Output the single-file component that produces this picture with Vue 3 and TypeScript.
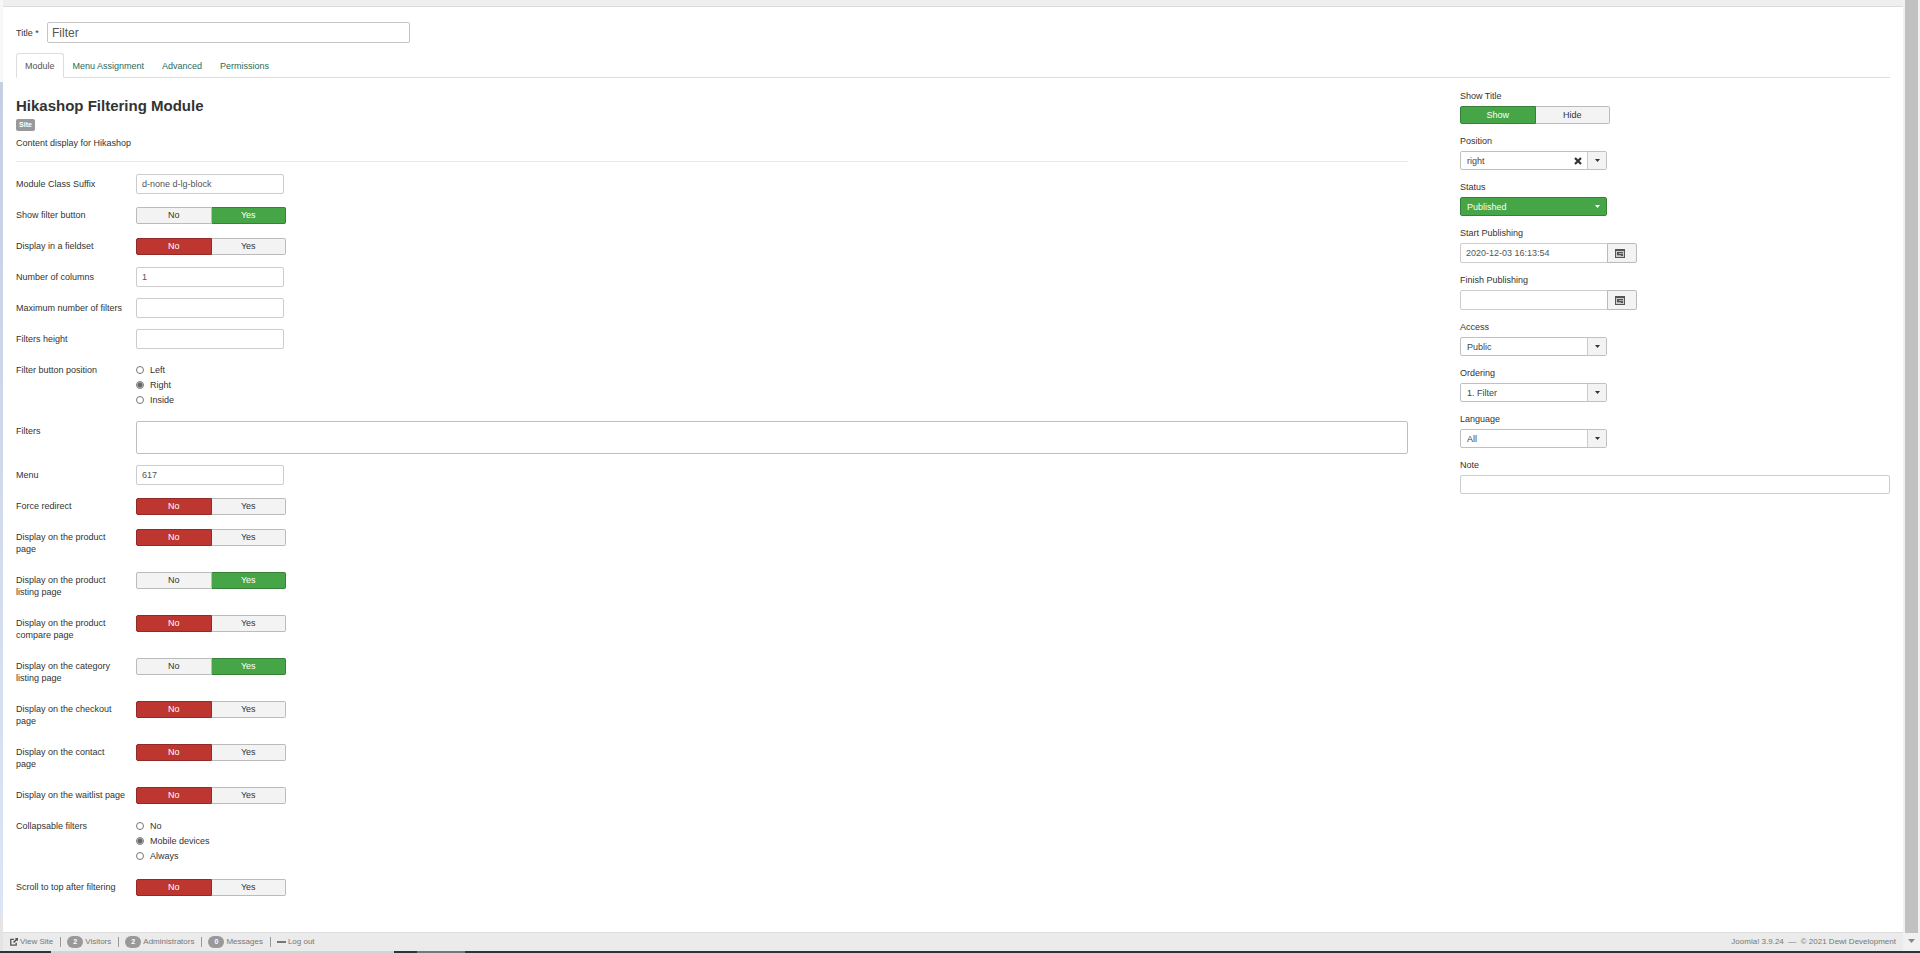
<script setup lang="ts">
import { reactive, ref } from 'vue'

type Kind = 'text' | 'toggle' | 'radios' | 'area'

interface Field {
  id: string
  label: string
  kind: Kind
  value: string
  options?: string[]
}

interface Side {
  id: string
  label: string
  kind: 'toggle' | 'select' | 'date' | 'text'
  value: string
  clearable?: boolean
  status?: boolean
}

const title = ref('Filter')
const tabs = ['Module', 'Menu Assignment', 'Advanced', 'Permissions']
const active = ref('Module')

const toggle = (id: string, label: string, value: string): Field => ({ id, label, kind: 'toggle', value, options: ['No', 'Yes'] })
const text = (id: string, label: string, value = ''): Field => ({ id, label, kind: 'text', value })

const fields = reactive<Field[]>([
  text('suffix', 'Module Class Suffix', 'd-none d-lg-block'),
  toggle('button', 'Show filter button', 'Yes'),
  toggle('fieldset', 'Display in a fieldset', 'No'),
  text('columns', 'Number of columns', '1'),
  text('max', 'Maximum number of filters'),
  text('height', 'Filters height'),
  { id: 'position', label: 'Filter button position', kind: 'radios', value: 'Right', options: ['Left', 'Right', 'Inside'] },
  { id: 'filters', label: 'Filters', kind: 'area', value: '' },
  text('menu', 'Menu', '617'),
  toggle('redirect', 'Force redirect', 'No'),
  toggle('product', 'Display on the product\npage', 'No'),
  toggle('listing', 'Display on the product\nlisting page', 'Yes'),
  toggle('compare', 'Display on the product\ncompare page', 'No'),
  toggle('category', 'Display on the category\nlisting page', 'Yes'),
  toggle('checkout', 'Display on the checkout\npage', 'No'),
  toggle('contact', 'Display on the contact\npage', 'No'),
  toggle('waitlist', 'Display on the waitlist page', 'No'),
  { id: 'collapse', label: 'Collapsable filters', kind: 'radios', value: 'Mobile devices', options: ['No', 'Mobile devices', 'Always'] },
  toggle('scroll', 'Scroll to top after filtering', 'No'),
])

const side = reactive<Side[]>([
  { id: 'showtitle', label: 'Show Title', kind: 'toggle', value: 'Show' },
  { id: 'pos', label: 'Position', kind: 'select', value: 'right', clearable: true },
  { id: 'status', label: 'Status', kind: 'select', value: 'Published', status: true },
  { id: 'start', label: 'Start Publishing', kind: 'date', value: '2020-12-03 16:13:54' },
  { id: 'finish', label: 'Finish Publishing', kind: 'date', value: '' },
  { id: 'access', label: 'Access', kind: 'select', value: 'Public' },
  { id: 'ordering', label: 'Ordering', kind: 'select', value: '1. Filter' },
  { id: 'language', label: 'Language', kind: 'select', value: 'All' },
  { id: 'note', label: 'Note', kind: 'text', value: '' },
])

const counts = [
  { n: 2, label: 'Visitors' },
  { n: 2, label: 'Administrators' },
  { n: 0, label: 'Messages' },
]
</script>

<template>
  <div class="window">
    <div class="body">
      <div class="edge"><i class="edge-top"></i><i class="edge-mid"></i><i class="edge-low"></i></div>
      <div class="page">
        <div class="toolbar"></div>
        <main class="content">
          <div class="title-row">
            <label for="title">Title *</label>
            <input id="title" v-model="title" type="text" />
          </div>
          <nav class="tabs">
            <button v-for="t in tabs" :key="t" type="button" :class="{ active: t === active }" @click="active = t">{{ t }}</button>
          </nav>
          <div class="columns">
            <section>
              <h1>Hikashop Filtering Module</h1>
              <span class="badge">Site</span>
              <p class="desc">Content display for Hikashop</p>
              <hr />
              <form class="form" @submit.prevent>
                <div v-for="f in fields" :key="f.id" class="row">
                  <label :id="f.id + '-label'" class="name" :for="f.kind === 'text' || f.kind === 'area' ? f.id : undefined">{{ f.label }}</label>
                  <input v-if="f.kind === 'text'" :id="f.id" v-model="f.value" class="box" type="text" />
                  <textarea v-else-if="f.kind === 'area'" :id="f.id" v-model="f.value" class="area"></textarea>
                  <div v-else-if="f.kind === 'toggle'" class="toggle" role="radiogroup" :aria-labelledby="f.id + '-label'">
                    <label v-for="o in f.options" :key="o" :class="{ green: o === 'Yes' && f.value === o, red: o === 'No' && f.value === o }">
                      <input v-model="f.value" type="radio" :name="f.id" :value="o" />{{ o }}
                    </label>
                  </div>
                  <div v-else class="radios" role="radiogroup" :aria-labelledby="f.id + '-label'">
                    <label v-for="o in f.options" :key="o">
                      <input v-model="f.value" type="radio" :name="f.id" :value="o" />{{ o }}
                    </label>
                  </div>
                </div>
              </form>
            </section>
            <aside>
              <div v-for="s in side" :key="s.id" class="group">
                <label :id="s.id + '-label'" :for="s.kind === 'toggle' ? undefined : s.id">{{ s.label }}</label>
                <div v-if="s.kind === 'toggle'" class="toggle" role="radiogroup" :aria-labelledby="s.id + '-label'">
                  <label v-for="o in ['Show', 'Hide']" :key="o" :class="{ green: o === 'Show' && s.value === o, red: o === 'Hide' && s.value === o }">
                    <input v-model="s.value" type="radio" :name="s.id" :value="o" />{{ o }}
                  </label>
                </div>
                <div v-else-if="s.kind === 'select'" class="select" :class="{ published: s.status }">
                  <select :id="s.id" v-model="s.value">
                    <option>{{ s.value }}</option>
                  </select>
                  <button v-if="s.clearable" class="clear" type="button" aria-label="Clear">
                    <svg width="8" height="8" viewBox="0 0 8 8"><path d="M1 1l6 6M7 1L1 7" stroke="#333" stroke-width="2.2" /></svg>
                  </button>
                  <span class="arrow"><svg width="5" height="3" viewBox="0 0 5 3"><path d="M0 0h5L2.5 3z" fill="currentColor" /></svg></span>
                </div>
                <div v-else-if="s.kind === 'date'" class="date">
                  <input :id="s.id" v-model="s.value" type="text" />
                  <button type="button" aria-label="Open the calendar">
                    <svg width="10" height="9" viewBox="0 0 10 9">
                      <path d="M0 0h10v9H0z" fill="#555" />
                      <path d="M1 2h8v1H1zM1 3h1v5H1zM8 3h1v5H8zM1 7h8v1H1z" fill="#ccc" />
                      <path d="M4 4h4v1H4zM2 6h4v1H2z" fill="#aaa" />
                    </svg>
                  </button>
                </div>
                <input v-else :id="s.id" v-model="s.value" class="note" type="text" />
              </div>
            </aside>
          </div>
        </main>
        <footer class="status">
          <a href="#" class="site">
            <svg width="8" height="8" viewBox="0 0 8 8">
              <path d="M4 1.3H.8v5.9h5.4V4.8" fill="none" stroke="#555" stroke-width="1.3" />
              <path d="M4.8 0H8v3.2L7 2.2 4.1 5.1 3 4 5.9 1.1z" fill="#555" />
            </svg>View Site</a>
          <template v-for="c in counts" :key="c.label">
            <i class="sep"></i>
            <span class="count"><b>{{ c.n }}</b>{{ c.label }}</span>
          </template>
          <i class="sep"></i>
          <a href="#" class="logout"><i></i>Log out</a>
          <span class="version">Joomla! 3.9.24 &nbsp;—&nbsp; © 2021 Dewi Development</span>
        </footer>
      </div>
      <div class="scroll">
        <div class="thumb"></div>
        <svg width="7" height="4" viewBox="0 0 7 4"><path d="M0 0h7L3.5 4z" fill="#888" /></svg>
      </div>
    </div>
    <div class="taskline"><i></i><i></i><i></i><i></i><i></i></div>
  </div>
</template>

<style>
body {
  margin: 0;
}
</style>

<style scoped>
.window {
  display: flex;
  flex-direction: column;
  min-height: 100vh;
  background: #fff;
  color: #333;
  font: 9px/12px "Liberation Sans", Arial, sans-serif;
}
.window * {
  box-sizing: border-box;
}
input,
textarea,
select,
button {
  margin: 0;
  font: inherit;
  color: #555;
}
.body {
  flex: 1;
  display: flex;
}
.edge {
  width: 3px;
  display: flex;
  flex-direction: column;
}
.edge-top {
  height: 82px;
  background: #f7f8f8;
}
.edge-mid {
  flex: 1;
  background: linear-gradient(#c6cee4, #dce5f3);
}
.edge-low {
  height: 36px;
  background: #e4e4e4;
}
.page {
  flex: 1;
  min-width: 0;
  display: flex;
  flex-direction: column;
}
.toolbar {
  height: 7px;
  background: #efefef;
  border-bottom: 1px solid #dcdcdc;
}
.content {
  flex: 1;
  padding: 15px 13px 16px;
}
.title-row {
  display: flex;
  align-items: center;
  gap: 9px;
  padding-bottom: 10px;
}
.title-row label {
  width: 22px;
  white-space: nowrap;
}
.title-row input {
  width: 363px;
  height: 21px;
  padding: 0 4px;
  border: 1px solid #c4c4c4;
  border-radius: 2px;
  font-size: 12px;
}
.tabs {
  display: flex;
  border-bottom: 1px solid #ddd;
}
.tabs button {
  height: 25px;
  margin-bottom: -1px;
  padding: 0 8px;
  border: 1px solid transparent;
  border-radius: 3px 3px 0 0;
  background: none;
  color: #1f6b5c;
}
.tabs .active {
  border-color: #ddd #ddd #fff;
  background: #fff;
  color: #555;
}
.columns {
  display: grid;
  grid-template-columns: 1392fr 430fr;
  gap: 52px;
}
h1 {
  margin: 18px 0 3px;
  font-size: 15px;
  line-height: 20px;
}
.badge {
  display: block;
  width: 19px;
  height: 12px;
  border-radius: 2px;
  background: #999;
  color: #fff;
  font-size: 7px;
  font-weight: bold;
  text-align: center;
}
.desc {
  margin: 6px 0 12px;
}
hr {
  margin: 0 0 12px;
  border: 0;
  border-top: 1px solid #e8e8e8;
}
.form {
  display: flex;
  flex-direction: column;
  gap: 11px;
}
.row {
  display: flex;
  align-items: flex-start;
}
.name {
  width: 120px;
  padding: 4px 0;
  white-space: pre-line;
}
.box,
.note,
.date input {
  height: 20px;
  padding: 0 5px;
  border: 1px solid #ccc;
  border-radius: 2px;
  background: #fff;
}
.box {
  width: 148px;
}
.area {
  display: block;
  flex: 1;
  height: 33px;
  padding: 4px 5px;
  border: 1px solid #c0c0c0;
  border-radius: 2px;
  resize: none;
}
.toggle {
  display: flex;
  width: 150px;
  height: 17px;
}
.row .toggle {
  margin-top: 2px;
}
.toggle label {
  flex: 1;
  border: 1px solid #bbb;
  background: #f3f3f3;
  line-height: 15px;
  text-align: center;
}
.toggle label:first-child {
  border-radius: 2px 0 0 2px;
}
.toggle label:last-child {
  border-left-width: 0;
  border-radius: 0 2px 2px 0;
}
.toggle input {
  position: absolute;
  appearance: none;
  opacity: 0;
}
.toggle .green {
  border-color: #378137;
  background: #46a546;
  color: #fff;
}
.toggle .red {
  border-color: #942a25;
  background: #bd362f;
  color: #fff;
}
.radios {
  height: 50px;
  padding-top: 2px;
}
.radios label {
  display: flex;
  align-items: center;
  gap: 6px;
  height: 15px;
}
.radios input {
  appearance: none;
  width: 8px;
  height: 8px;
  border: 1px solid #777;
  border-radius: 50%;
  background: #fff;
}
.radios input:checked {
  background: radial-gradient(circle, #666 0 2px, #ddd 3px);
}
aside {
  display: flex;
  flex-direction: column;
  gap: 11px;
  padding-top: 12px;
}
.group {
  display: flex;
  flex-direction: column;
  align-items: flex-start;
  gap: 4px;
}
.select,
.note {
  height: 19px;
}
.group .toggle {
  height: 18px;
}
.group .toggle label {
  line-height: 16px;
}
.select {
  display: flex;
  width: 147px;
  border: 1px solid #c0c0c0;
  border-radius: 2px;
  background: #fff;
}
.select select {
  appearance: none;
  flex: 1;
  min-width: 0;
  padding: 0 6px;
  border: 0;
  background: none;
  color: #444;
}
.clear {
  display: flex;
  align-items: center;
  padding: 0 5px;
  border: 0;
  background: none;
}
.arrow {
  display: flex;
  align-items: center;
  justify-content: center;
  width: 19px;
  border-left: 1px solid #ccc;
  background: #f3f3f3;
}
.published {
  border-color: #378137;
  background: #46a546;
}
.published select,
.published .arrow {
  border-color: #46a546;
  background: #46a546;
  color: #fff;
}
.date {
  display: flex;
}
.date input {
  width: 148px;
  border-radius: 2px 0 0 2px;
}
.date button {
  display: flex;
  align-items: center;
  justify-content: center;
  width: 30px;
  margin-left: -1px;
  padding: 0 4px 0 0;
  border: 1px solid #bbb;
  border-radius: 0 2px 2px 0;
  background: #f3f3f3;
}
.note {
  width: 100%;
}
.status {
  display: flex;
  align-items: center;
  height: 19px;
  padding: 0 7px;
  border-top: 1px solid #dcdcdc;
  background: #ebebeb;
  color: #777;
  font-size: 8px;
}
.status a {
  color: #777;
  text-decoration: none;
}
.site,
.count,
.logout {
  display: flex;
  align-items: center;
  gap: 2px;
}
.sep {
  width: 1px;
  height: 10px;
  margin: 0 6px 0 7px;
  background: #999;
}
.count b {
  width: 16px;
  height: 12px;
  border-radius: 6px;
  background: #999;
  color: #fff;
  font-size: 7px;
  text-align: center;
}
.logout i {
  width: 9px;
  height: 2px;
  background: #777;
}
.version {
  margin-left: auto;
}
.scroll {
  display: flex;
  flex-direction: column;
  align-items: center;
  width: 17px;
  padding: 0 2px 8px;
  background: #f1f1f1;
}
.thumb {
  flex: 1;
  width: 13px;
  margin-bottom: 6px;
  background: #c1c1c1;
}
.taskline {
  display: flex;
  height: 2px;
  background: #333;
}
.taskline i:nth-child(1) {
  width: 51px;
}
.taskline i:nth-child(2) {
  width: 343px;
  background: #d4d4d4;
}
.taskline i:nth-child(3) {
  width: 23px;
}
.taskline i:nth-child(4) {
  width: 48px;
  background: #777;
}
</style>
